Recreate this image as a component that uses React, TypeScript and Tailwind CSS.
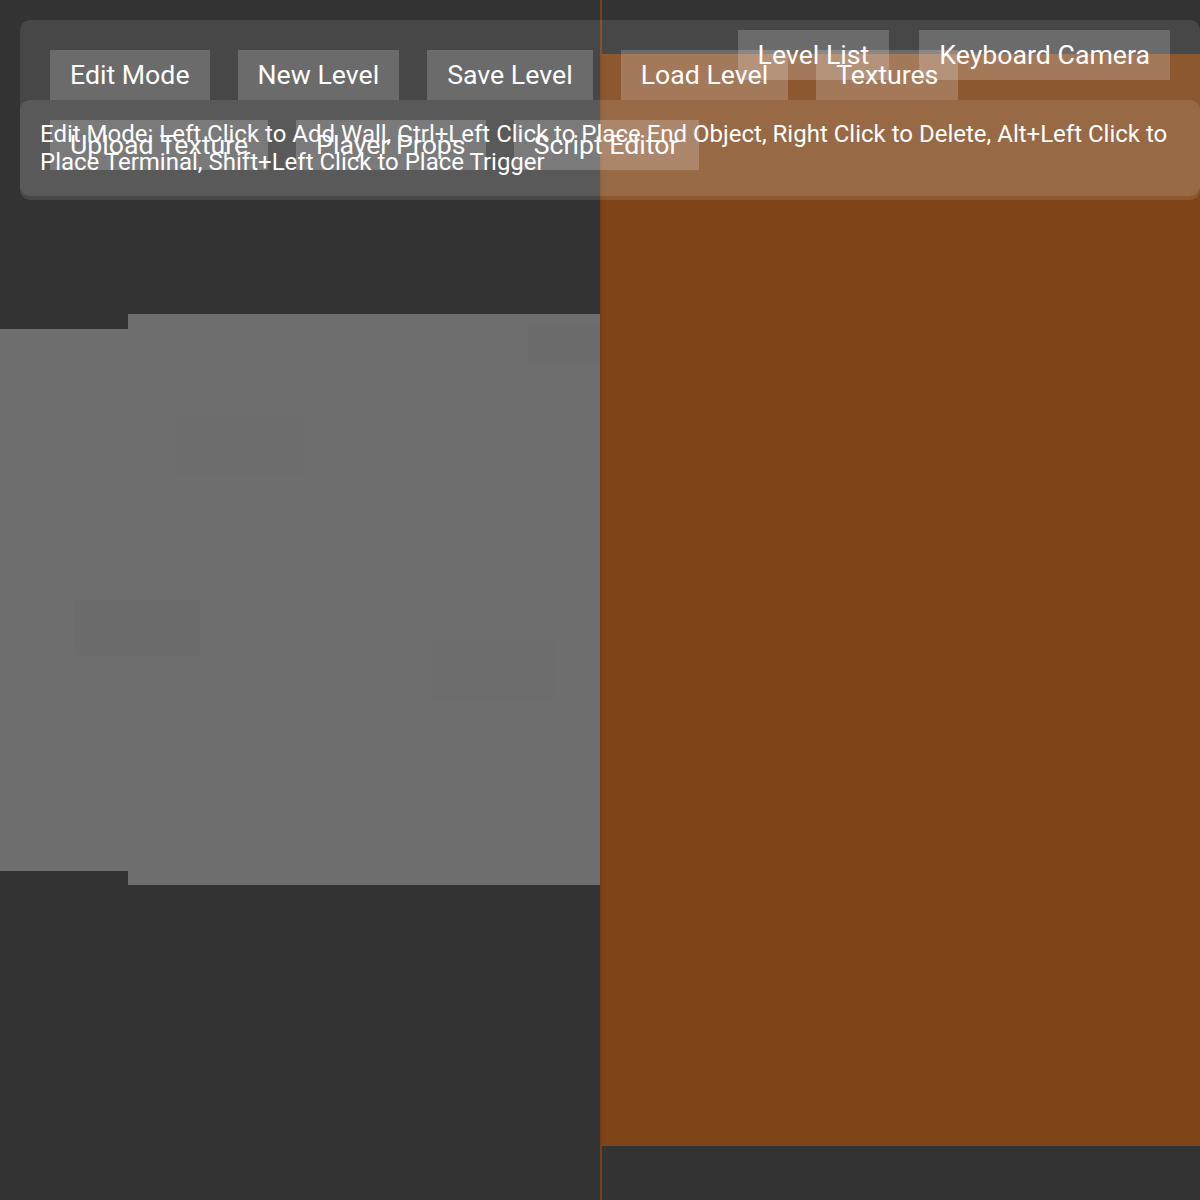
import React from "react";

const rowButtons = ["Edit Mode", "New Level", "Save Level", "Load Level", "Textures", "Upload Texture", "Player Props", "Script Editor"];
const cornerButtons = ["Level List", "Keyboard Camera"];

function ToolButton({ label }: { label: string }) {
  return (
    <button className="px-[20px] py-[10px] text-[26.7px] leading-[30px] text-white bg-white/20 whitespace-nowrap">
      {label}
    </button>
  );
}

// 2D level drawing (walls / floor tiles)
function LevelCanvas() {
  return (
    <svg width="600" height="1200" viewBox="0 0 600 1200" className="block">
      <rect x="0" y="329" width="128" height="542" fill="#6e6e6e" />
      <rect x="128" y="314" width="472" height="571" fill="#6e6e6e" />
      <rect x="528" y="325" width="72" height="40" fill="#6c6c6c" />
      <rect x="75" y="600" width="125" height="55" fill="#6c6c6c" />
      <rect x="430" y="640" width="125" height="60" fill="#6d6d6d" />
      <rect x="176" y="415" width="128" height="60" fill="#6d6d6d" />
    </svg>
  );
}

export default function App() {
  return (
    <div className="relative w-[1200px] h-[1200px] overflow-hidden bg-[#333333] [font-family:Roboto,'Noto_Sans',sans-serif]">
      {/* Editor + 3D view */}
      <div className="flex h-full">
        <div className="w-[600px] h-full">
          <LevelCanvas />
        </div>
        <div className="w-[2px] h-full bg-[#74401a]" />
        <div className="flex-1 flex items-center">
          <div className="w-full h-[1092px] bg-[#7f4519]" />
        </div>
      </div>

      {/* Toolbar */}
      <div className="absolute top-[20px] left-[20px] right-0 p-[30px] rounded-[10px] bg-white/10 flex flex-wrap gap-x-[28px] gap-y-[20px]">
        {rowButtons.map((b) => (
          <ToolButton key={b} label={b} />
        ))}
      </div>

      {/* Help text */}
      <div className="absolute top-[100px] left-[20px] right-0 p-[20px] rounded-[10px] bg-white/10 text-white text-[24px] leading-[28px]">
        Edit Mode: Left Click to Add Wall, Ctrl+Left Click to Place End Object, Right Click to Delete, Alt+Left Click to Place Terminal, Shift+Left Click to Place Trigger
      </div>

      {/* Top-right controls */}
      <div className="absolute top-[30px] right-[30px] flex gap-[30px]">
        {cornerButtons.map((b) => (
          <ToolButton key={b} label={b} />
        ))}
      </div>
    </div>
  );
}
